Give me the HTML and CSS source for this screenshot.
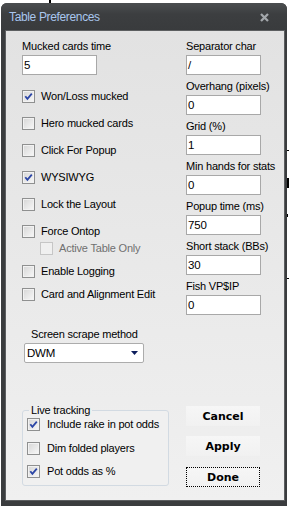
FILE: index.html
```html
<!DOCTYPE html>
<html lang="en">
<head>
    <meta charset="UTF-8">
    <meta name="viewport" content="width=device-width, initial-scale=1.0">
    <title>Table Preferences</title>
    <link rel="stylesheet" href="styles.css">
</head>
<body>
    <div class="backdrop">
        <span class="mark mark-top"></span>
        <span class="mark mark-r1"></span>
        <span class="mark mark-r2"></span>
        <span class="mark mark-r3"></span>
        <span class="mark mark-r4"></span>
    </div>
    <div class="window">
        <div class="titlebar">
            <span class="title">Table Preferences</span>
            <svg class="close" width="9" height="9" viewBox="0 0 9 9">
                <path d="M1 1 L8 8 M8 1 L1 8" stroke="#a3a7ab" stroke-width="2.3" fill="none"/>
            </svg>
        </div>
        <div class="client">
            <div class="columns">
                <div class="col-left">
                    <div class="field-label">Mucked cards time</div>
                    <div class="textbox">5</div>

                    <div class="checks">
                        <div class="check"><span class="box on"><svg viewBox="0 0 11 11"><path d="M2.3 5.2 L4.4 7.8 L8.8 2.6"/></svg></span>Won/Loss mucked</div>
                        <div class="check"><span class="box"></span>Hero mucked cards</div>
                        <div class="check"><span class="box"></span>Click For Popup</div>
                        <div class="check"><span class="box on"><svg viewBox="0 0 11 11"><path d="M2.3 5.2 L4.4 7.8 L8.8 2.6"/></svg></span>WYSIWYG</div>
                        <div class="check"><span class="box"></span>Lock the Layout</div>
                        <div class="check"><span class="box"></span>Force Ontop</div>
                        <div class="check sub disabled"><span class="box"></span>Active Table Only</div>
                        <div class="check spaced"><span class="box"></span>Enable Logging</div>
                        <div class="check spaced"><span class="box"></span>Card and Alignment Edit</div>
                    </div>

                    <div class="combo-label">Screen scrape method</div>
                    <div class="combo">
                        <span>DWM</span>
                        <svg width="7" height="4" viewBox="0 0 7 4"><path d="M0 0 H7 L3.5 4 Z" fill="#0c1d5c"/></svg>
                    </div>
                </div>

                <div class="col-right">
                    <div class="field"><div class="field-label">Separator char</div><div class="textbox">/</div></div>
                    <div class="field"><div class="field-label">Overhang (pixels)</div><div class="textbox">0</div></div>
                    <div class="field"><div class="field-label">Grid (%)</div><div class="textbox">1</div></div>
                    <div class="field"><div class="field-label">Min hands for stats</div><div class="textbox">0</div></div>
                    <div class="field"><div class="field-label">Popup time (ms)</div><div class="textbox">750</div></div>
                    <div class="field"><div class="field-label">Short stack (BBs)</div><div class="textbox">30</div></div>
                    <div class="field"><div class="field-label">Fish VP$IP</div><div class="textbox">0</div></div>
                </div>
            </div>

            <div class="footer">
                <fieldset class="group">
                    <legend>Live tracking</legend>
                    <div class="check"><span class="box on"><svg viewBox="0 0 11 11"><path d="M2.3 5.2 L4.4 7.8 L8.8 2.6"/></svg></span>Include rake in pot odds</div>
                    <div class="check"><span class="box"></span>Dim folded players</div>
                    <div class="check"><span class="box on"><svg viewBox="0 0 11 11"><path d="M2.3 5.2 L4.4 7.8 L8.8 2.6"/></svg></span>Pot odds as %</div>
                </fieldset>
                <div class="buttons">
                    <div class="btn">Cancel</div>
                    <div class="btn">Apply</div>
                    <div class="btn focused">Done</div>
                </div>
            </div>
        </div>
    </div>
</body>
</html>
```

FILE: styles.css
```css
body {
    margin: 0;
    background: #fff;
    font-family: "Liberation Sans", Arial, sans-serif;
    font-size: 11px;
    letter-spacing: -0.2px;
    color: #000;
}
.backdrop {
    position: absolute;
    top: 0;
    left: 0;
    width: 289px;
    height: 508px;
    z-index: -1;
}
.mark {
    position: absolute;
    background: #000;
}
.mark-top { left: 49px; top: 0; width: 2px; height: 3px; }
.mark-r1 { left: 287px; top: 150px; width: 2px; height: 1px; }
.mark-r2 { left: 287px; top: 178px; width: 2px; height: 10px; }
.mark-r3 { left: 287px; top: 214px; width: 1px; height: 3px; }
.mark-r4 { left: 287px; top: 278px; width: 2px; height: 1px; }

.window {
    margin: 3px 0 0 1px;
    width: 286px;
    height: 503px;
    box-sizing: border-box;
    padding-bottom: 6px;
    background: #3a3c3e;
    border-radius: 6px 6px 0 0;
    display: flex;
    flex-direction: column;
}
.titlebar {
    height: 28px;
    flex: none;
    display: flex;
    align-items: center;
    justify-content: space-between;
    padding: 0 18px 0 8px;
    background: linear-gradient(#4b4e50, #3c3e40 40%, #393b3d);
    border-radius: 6px 6px 0 0;
}
.title {
    font-size: 12px;
    letter-spacing: -0.35px;
    color: #a9c6ee;
}
.close {
    display: block;
}
.client {
    flex: 1;
    margin: 0 3px 0 5px;
    padding: 7px 0 0 16px;
    background: linear-gradient(#e2e2e2, #f0f0f0);
    box-shadow: 0 0 0 1px #5c5e60;
}

.columns {
    display: flex;
}
.col-left {
    width: 164px;
}
.col-right {
    width: 75px;
}
.field {
    margin-bottom: 3px;
}
.field-label {
    height: 17px;
    line-height: 17px;
    white-space: nowrap;
}
.textbox {
    width: 75px;
    height: 20px;
    box-sizing: border-box;
    border: 1px solid #a8a8a8;
    background: #fff;
    padding-left: 1px;
    line-height: 18px;
    font-size: 11.5px;
}

.checks {
    padding-top: 1px;
}
.check {
    display: flex;
    align-items: center;
    gap: 6px;
    height: 13px;
    line-height: 13px;
    margin-top: 14px;
    white-space: nowrap;
}
.check.sub {
    margin-top: 4px;
    margin-left: 18px;
}
.check.spaced {
    margin-top: 10px;
}
.box {
    width: 13px;
    height: 13px;
    flex: none;
    box-sizing: border-box;
    border: 1px solid #8f9090;
    background: linear-gradient(135deg, #d6d6d6, #f8f8f8);
    box-shadow: inset 0 0 0 1px #f2f2f2;
}
.box svg {
    display: block;
    width: 11px;
    height: 11px;
}
.box svg path {
    fill: none;
    stroke: #2c46a6;
    stroke-width: 1.8;
}
.check.disabled {
    color: #707070;
}
.check.disabled .box {
    border-color: #c6c6c6;
    background: #f0f0f0;
    box-shadow: none;
}

.combo-label {
    margin-top: 25px;
    height: 17px;
    line-height: 17px;
    padding-left: 9px;
}
.combo {
    margin-left: 2px;
    width: 120px;
    height: 20px;
    box-sizing: border-box;
    border: 1px solid #acacac;
    border-radius: 2px;
    background: #fff;
    display: flex;
    align-items: center;
    justify-content: space-between;
    padding: 0 5px 0 2px;
    font-size: 11.5px;
}
.combo svg {
    display: block;
}

.footer {
    display: flex;
    align-items: flex-start;
    margin-top: 41px;
}
.group {
    width: 147px;
    box-sizing: border-box;
    margin: 0;
    padding: 1px 0 7px 4px;
    border: 1px solid #d2dae2;
    border-radius: 3px;
    background: #f0f0f0;
}
.group legend {
    padding: 0 2px;
    margin-left: 2px;
    line-height: 13px;
}
.group .check {
    margin-top: 10.5px;
    gap: 7px;
}
.group .check:first-of-type {
    margin-top: 0;
}
.buttons {
    margin: 2px 0 0 17px;
    display: flex;
    flex-direction: column;
}
.btn {
    width: 74px;
    height: 20px;
    box-sizing: border-box;
    margin-bottom: 10px;
    background: linear-gradient(#f6f6f6, #f1f1f1);
    font-family: "DejaVu Sans", sans-serif;
    font-weight: bold;
    font-size: 11px;
    letter-spacing: 0;
    display: flex;
    align-items: center;
    justify-content: center;
}
.btn.focused {
    margin-top: 1px;
    border: 1px dotted #000;
}
```
